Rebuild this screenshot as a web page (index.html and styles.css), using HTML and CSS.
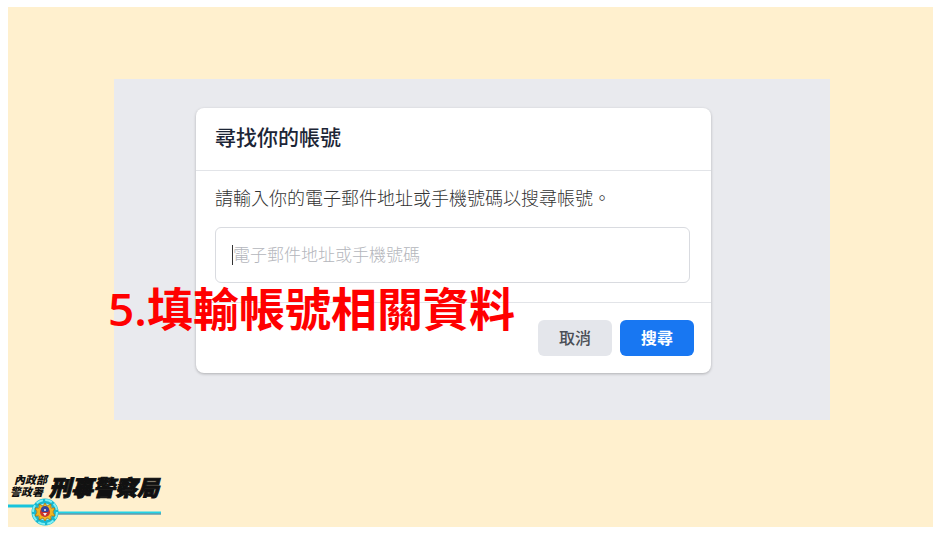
FILE: index.html
```html
<!DOCTYPE html>
<html lang="zh-Hant">
<head>
    <meta charset="UTF-8">
    <meta name="viewport" content="width=device-width, initial-scale=1.0">
    <title>尋找你的帳號</title>
    <link rel="stylesheet" href="styles.css">
</head>
<body>

    <main class="slide">

        <section class="panel">
            <form class="card">
                <h1>尋找你的帳號</h1>

                <div class="card-body">
                    <label for="account">請輸入你的電子郵件地址或手機號碼以搜尋帳號。</label>
                    <div class="field">
                        <input type="text" id="account" name="account" placeholder="電子郵件地址或手機號碼">
                        <span class="caret"></span>
                    </div>
                </div>

                <div class="card-footer">
                    <button type="button" class="cancel">取消</button>
                    <button type="submit" class="search">搜尋</button>
                </div>
            </form>

            <p class="step">5.填輸帳號相關資料</p>
        </section>

        <footer class="logo">
            <div class="logo-names">
                <div class="logo-parent">
                    <span>內政部</span>
                    <span>警政署</span>
                </div>
                <strong>刑事警察局</strong>
            </div>
            <svg class="logo-badge" width="153" height="29" viewBox="0 0 153 29" aria-hidden="true">
                <path d="M0 8h26" stroke="#18c4dc" stroke-width="3"/>
                <path d="M50 14.5h103" stroke="#22d3e6" stroke-width="2"/>
                <path d="M50 16h103" stroke="#16709c" stroke-width="1"/>
                <circle cx="37" cy="14" r="11" fill="#a8eef2" stroke="#18b8d0" stroke-width="5"/>
                <circle cx="37" cy="14" r="12" fill="none" stroke="#7df0f5" stroke-width="2" stroke-dasharray="7 2.4"/>
                <path d="M37 5l2 3 4-2 0 4 4 0-2 4 2 4-4 0 0 4-4-2-2 3-2-3-4 2 0-4-4 0 2-4-2-4 4 0 0-4 4 2z" fill="#f3b51f" stroke="#9a6a14" stroke-width="0.7"/>
                <circle cx="37" cy="14" r="5" fill="#c9342c"/>
                <path d="M33 12a4 4 0 0 1 8 0l-1 2h-6z" fill="#35439c"/>
                <path d="M35 15h4l-2 3z" fill="#f2eef5"/>
                <circle cx="37" cy="12" r="1" fill="#f2eef5"/>
            </svg>
        </footer>

    </main>

</body>
</html>
```

FILE: styles.css
```css
* {
    box-sizing: border-box;
}
body {
    font-family: "Open Sans", "Noto Sans CJK TC", sans-serif;
    background-color: #fff;
    margin: 0;
    padding: 7px 5px 6px 8px;
    min-height: 100vh;
    display: flex;
}
.slide {
    flex: 1;
    display: flex;
    flex-direction: column;
    background-color: #fff0ce;
}
.panel {
    position: relative;
    margin: 72px 103px 40px 106px;
    padding: 29px 119px 47px 82px;
    background-color: #e9eaee;
}
.card {
    background-color: #fff;
    border-radius: 8px;
    box-shadow: 0 1px 3px rgba(0, 0, 0, 0.25);
}
.card h1 {
    margin: 0;
    padding: 13px 19px 17px;
    border-bottom: 1px solid #e2e4e8;
    color: #1c2536;
    font-size: 21px;
    line-height: 32px;
    font-weight: 500;
}
.card-body {
    padding: 13px 21px 19px 19px;
    border-bottom: 1px solid #e2e4e8;
}
.card-body label {
    display: block;
    margin-bottom: 15px;
    color: #333;
    font-size: 18px;
    line-height: 28px;
    font-weight: 300;
}
.field {
    position: relative;
}
.field input {
    display: block;
    width: 100%;
    height: 56px;
    padding: 0 17px 2px;
    border: 1px solid #d9dbe0;
    border-radius: 6px;
    background-color: #fff;
    font-family: inherit;
    font-size: 17px;
    font-weight: 300;
}
.field input::placeholder {
    color: #b4b6bc;
    opacity: 1;
}
/* text cursor at the start of the field */
.caret {
    position: absolute;
    top: 18px;
    left: 17px;
    width: 1px;
    height: 20px;
    background-color: #333;
}
.card-footer {
    display: flex;
    justify-content: flex-end;
    gap: 8px;
    padding: 17px;
}
.card-footer button {
    width: 74px;
    height: 36px;
    padding: 0 0 3px;
    border: none;
    border-radius: 6px;
    font-family: inherit;
    font-size: 16px;
    cursor: pointer;
}
.cancel {
    background-color: #e4e6eb;
    color: #4b4f56;
    font-weight: 500;
}
.search {
    background-color: #1877f2;
    color: #fff;
    font-weight: 700;
}
/* red caption laid over the card */
.step {
    position: absolute;
    bottom: 82px;
    left: -6px;
    margin: 0;
    color: #f00;
    font-size: 46px;
    line-height: 60px;
    font-weight: 600;
    white-space: nowrap;
}
.logo {
    margin-top: auto;
}
.logo-names {
    display: flex;
    gap: 2px;
    padding-left: 2px;
    color: #111;
    font-style: italic;
    font-weight: 900;
}
.logo-parent {
    font-size: 11px;
    line-height: 12px;
}
.logo-parent span {
    display: block;
}
.logo-parent span:first-child {
    padding-left: 4px;
}
.logo strong {
    font-size: 22px;
    line-height: 26px;
    height: 24px;
    font-weight: 900;
    -webkit-text-stroke: 1px #111;
}
.logo-badge {
    display: block;
}
```
